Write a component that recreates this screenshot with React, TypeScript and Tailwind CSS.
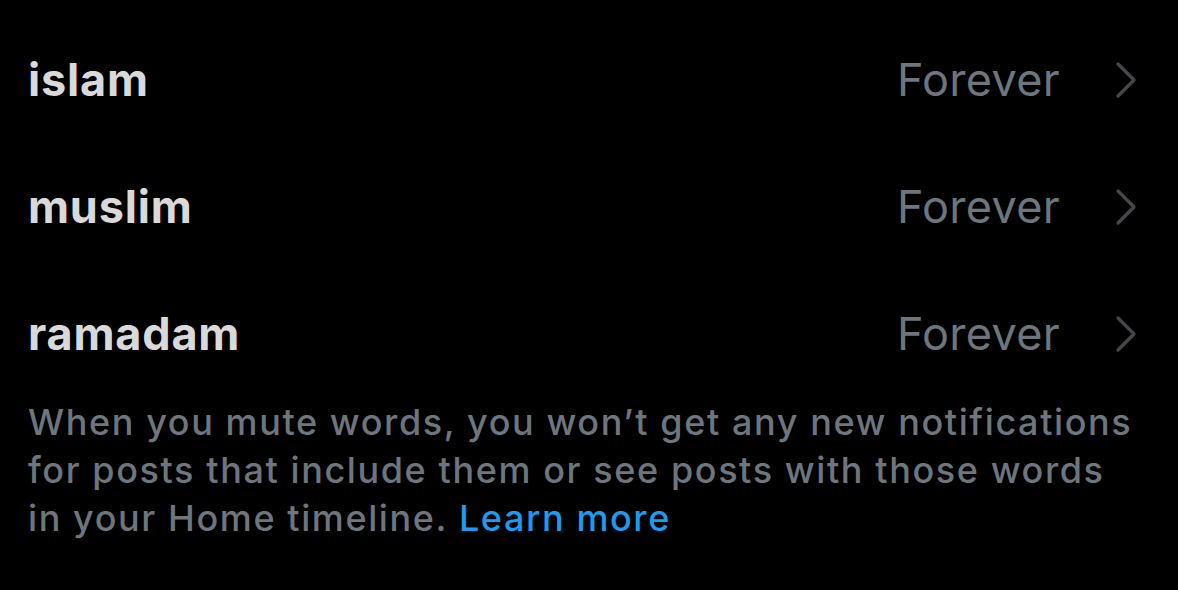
const words = ["islam", "muslim", "ramadam"];

function Chevron() {
  return (
    <svg width="24" height="40" viewBox="0 0 24 40" fill="none" className="shrink-0">
      <path d="M4 4 L20 20 L4 36" stroke="#45484b" strokeWidth="3.2" strokeLinecap="round" strokeLinejoin="round" />
    </svg>
  );
}

export default function App() {
  return (
    <div className="w-[1178px] h-[590px] bg-black font-['Inter',sans-serif] overflow-hidden">
      <ul className="pt-[29px]">
        {words.map((w) => (
          <li key={w} className="h-[127px] flex items-start pl-[28px] pr-[40px]">
            <div className="flex w-full items-center h-[102px]">
              <span className="flex-1 text-[45px] font-bold text-[#d9d9d9] tracking-[0.8px]">{w}</span>
              <span className="text-[45px] text-[#6e767d] tracking-[0.3px] mr-[54px]">Forever</span>
              <Chevron />
            </div>
          </li>
        ))}
      </ul>
      <p className="pl-[28px] pr-[38px] -mt-[12px] text-[36px] leading-[48px] tracking-[1.6px] font-medium text-[#6e767d]">
        When you mute words, you won’t get any new notifications for posts that include them or see posts with those words in your Home timeline.{" "}
        <a className="text-[#1d9bf0]">Learn more</a>
      </p>
    </div>
  );
}
